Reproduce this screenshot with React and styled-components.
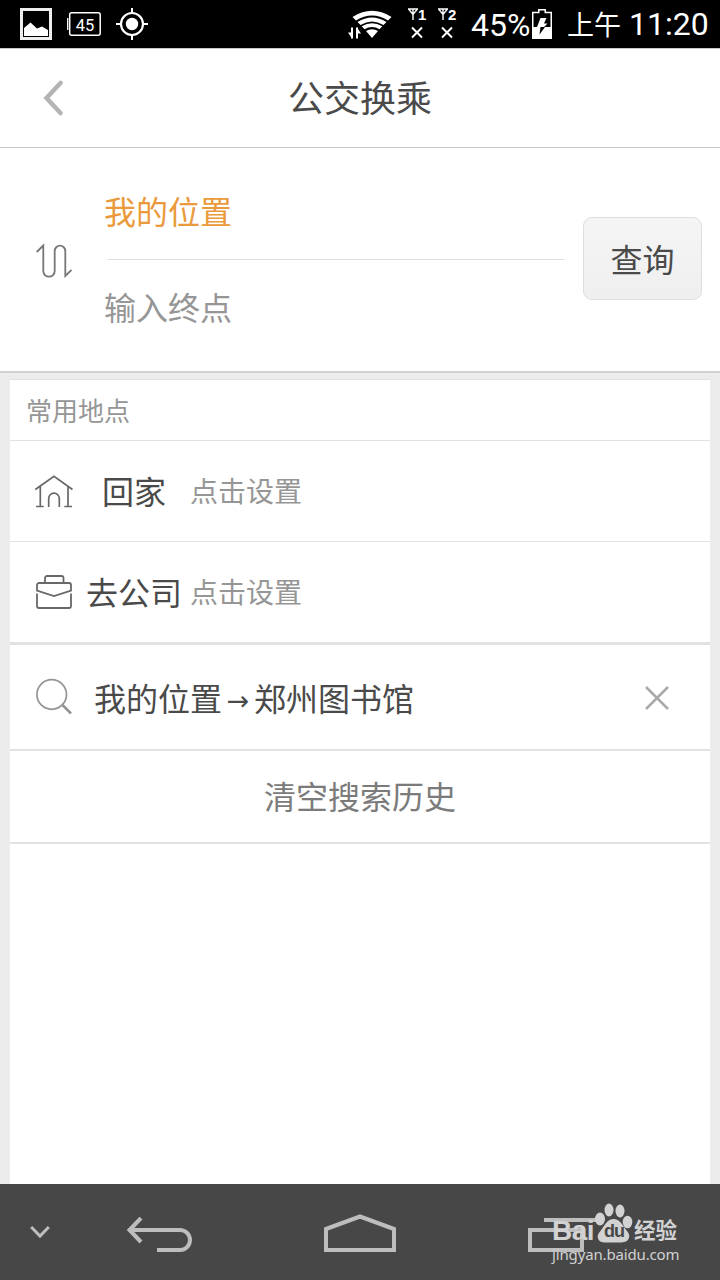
import styled, { createGlobalStyle } from "styled-components";

const GlobalStyle = createGlobalStyle`
  * {
    box-sizing: border-box;
  }
  body {
    margin: 0;
    background: #ececec;
    font-family: "Noto Sans CJK SC", sans-serif;
    color: #4a4a4a;
  }
  svg {
    display: block;
    flex: none;
  }
`;

const Screen = styled.div`
  width: 720px;
  height: 1280px;
  display: flex;
  flex-direction: column;
  overflow: hidden;
`;

const StatusBar = styled.div`
  height: 48px;
  flex: none;
  display: flex;
  align-items: center;
  padding: 0 12px 0 20px;
  background: #000;
  color: #fff;
`;

const StatusIcons = styled.div`
  display: flex;
  align-items: center;
  gap: 15px;
  margin-right: auto;
`;

const StatusText = styled.span`
  font-family: Roboto, "Noto Sans CJK SC", sans-serif;
  font-size: ${({ $size }) => $size || "32px"};
  font-weight: 400;
  line-height: 48px;
  white-space: nowrap;
  width: ${({ $width }) => $width};
  margin-left: ${({ $left }) => $left || 0};
  padding-top: ${({ $top }) => $top || 0};
`;

const Sim = styled.div`
  display: flex;
  flex-direction: column;
  width: 20px;
  margin-left: ${({ $left }) => $left};
`;

const SimTop = styled.div`
  display: flex;
  align-items: center;
  height: 15px;
  font: bold 15px/15px "Liberation Sans", sans-serif;
`;

const Header = styled.header`
  height: 100px;
  flex: none;
  display: grid;
  grid-template-columns: 100px 1fr 100px;
  align-items: center;
  background: #fff;
  border-top: 1px solid #c8c8c8;
  border-bottom: 1px solid #c8c8c8;
`;

const BackButton = styled.button`
  padding: 0 0 0 42px;
  border: 0;
  background: none;
`;

const Title = styled.h1`
  margin: 0;
  padding-bottom: 4px;
  text-align: center;
  font-size: 36px;
  font-weight: 400;
  line-height: 52px;
`;

const RouteForm = styled.section`
  height: 225px;
  flex: none;
  display: flex;
  align-items: center;
  padding: 0 18px 0 36px;
  background: #fff;
  border-bottom: 2px solid #d0d0d0;
`;

const Fields = styled.div`
  flex: 1;
  margin: 0 19px 0 32px;
`;

const Field = styled.div`
  height: 96px;
  font-size: 32px;
  line-height: ${({ $line }) => $line};
  color: ${({ $color }) => $color};
`;

const FieldLine = styled.div`
  height: 1px;
  margin-left: 4px;
  background: #dedede;
`;

const SearchButton = styled.button`
  width: 119px;
  height: 83px;
  margin-bottom: 2px;
  padding: 0 0 1px;
  border: 1.5px solid #dedede;
  border-radius: 9px;
  background: linear-gradient(#f5f5f5, #efefef);
  font: 32px "Noto Sans CJK SC", sans-serif;
  color: #4a4a4a;
`;

const Panel = styled.main`
  flex: 1;
  margin: 6px 10px 0;
  background: #fff;
  border-top: 1px solid #e2e2e2;
`;

const SectionTitle = styled.h2`
  height: 61px;
  margin: 0;
  padding-left: 16px;
  font-size: 26px;
  font-weight: 400;
  line-height: 59px;
  color: #969696;
  border-bottom: 1px solid #e2e2e2;
`;

const Row = styled.div`
  height: ${({ $height }) => $height};
  display: flex;
  align-items: center;
  justify-content: ${({ $center }) => ($center ? "center" : "flex-start")};
  padding: ${({ $center }) => ($center ? 0 : "0 39px 0 24px")};
  border-bottom: ${({ $line }) => $line || "1px"} solid #e2e2e2;
`;

const PlaceName = styled.span`
  width: 110px;
  margin-left: 5px;
  padding-bottom: 3px;
  text-align: center;
  font-size: 32px;
  line-height: 48px;
`;

const PlaceHint = styled.span`
  margin-left: 1px;
  padding-bottom: 2px;
  font-size: 28px;
  line-height: 48px;
  color: #969696;
`;

const HistoryText = styled.span`
  flex: 1;
  display: flex;
  margin-left: 20px;
  font-size: 32px;
  line-height: 48px;
`;

const Arrow = styled.span`
  width: 32px;
  text-align: center;
  font-family: "DejaVu Sans", sans-serif;
  font-size: 27px;
  line-height: 56px;
  height: 48px;
`;

const ClearText = styled.span`
  padding-bottom: 3px;
  font-size: 32px;
  line-height: 48px;
  color: #7b7b7b;
`;

const NavBar = styled.nav`
  position: relative;
  height: 96px;
  flex: none;
  background: #474747;
  display: flex;
  align-items: center;
  padding-left: 30px;
`;

const NavButton = styled.button`
  margin-left: ${({ $left }) => $left || 0};
  padding: ${({ $top }) => $top || 0} 0 0;
  border: 0;
  background: none;
`;

/* the watermark lies over the recents button */
const Watermark = styled.div`
  position: absolute;
  left: 552px;
  top: 17px;
  width: 130px;
  color: #d2d2d2;
`;

const Brand = styled.div`
  display: flex;
  align-items: flex-end;
  height: 46px;
`;

const BrandText = styled.span`
  width: ${({ $width }) => $width};
  font: bold ${({ $size }) => $size} / 32px "Liberation Sans", "Noto Sans CJK SC", sans-serif;
  letter-spacing: ${({ $spacing }) => $spacing || 0};
  white-space: nowrap;
`;

const Paw = styled.div`
  position: relative;
  width: 39px;
  height: 42px;
  margin-bottom: 3px;
`;

const PawText = styled.span`
  position: absolute;
  left: 9px;
  top: 19px;
  font: bold 18px/20px "Liberation Sans", sans-serif;
  letter-spacing: -1px;
  color: #474747;
`;

const Site = styled.div`
  font: 15px/18px "Noto Sans", sans-serif;
  margin-top: -2px;
  letter-spacing: -0.15px;
`;

function PictureIcon() {
  return (
    <svg width="32" height="32" viewBox="0 0 32 32">
      <rect x="1.5" y="1.5" width="29" height="29" fill="none" stroke="#eee" strokeWidth="3" />
      <path d="M4 28V20L10.500 14.500 17 20.500 22 18.500 28 22V28Z" fill="#fff" />
    </svg>
  );
}

function LevelIcon() {
  return (
    <svg width="34" height="24" viewBox="0 0 34 24">
      <path d="M.7 6v12" stroke="#fff" strokeWidth="1.300" />
      <rect x="2.700" y=".8" width="30.500" height="22.400" rx="2" fill="none" stroke="#fff" strokeWidth="1.500" />
      <text x="18" y="18.500" textAnchor="middle" fill="#fff" fontFamily="Roboto" fontSize="16.500">
        45
      </text>
    </svg>
  );
}

function LocateIcon() {
  return (
    <svg width="32" height="32" viewBox="0 0 32 32" fill="none" stroke="#fff">
      <circle cx="16" cy="16" r="11" strokeWidth="2.200" />
      <circle cx="16" cy="16" r="6.200" fill="#fff" stroke="none" />
      <path d="M16 0v5M16 27v5M0 16h5M27 16h5" strokeWidth="2" />
    </svg>
  );
}

function WifiIcon() {
  return (
    <svg width="44" height="30" viewBox="0 0 44 30">
      <path d="M4.500 8Q24 -4.500 43.500 8L40 11.500Q24 1.500 8 11.500Z" fill="#fff" />
      <path d="M9.500 13Q24 4 38.500 13L35.500 16Q24 9 12.500 16Z" fill="#fff" />
      <path d="M13.700 17.300Q24 11 34.300 17.300L31.500 20.300Q24 15.500 16.500 20.300Z" fill="#fff" />
      <path d="M18 22Q24 18.300 30 22L24 29Z" fill="#fff" />
      <path d="M4 18.500v11M9 18.500v11" stroke="#fff" strokeWidth="2" />
      <path d="M0 23.500h4v6ZM13 24.500H9v-6Z" fill="#fff" />
    </svg>
  );
}

function SimSignal({ number, left }) {
  return (
    <Sim $left={left}>
      <SimTop>
        <svg width="10" height="12" viewBox="0 0 10 12" fill="none" stroke="#fff" strokeWidth="1.400">
          <path d="M.5 1h9L5 6.500ZM5 1v11" />
        </svg>
        {number}
      </SimTop>
      <svg width="20" height="20" viewBox="0 0 20 20" stroke="#fff" strokeWidth="2">
        <path d="M4 5.500l10 10M14 5.500L4 15.500" />
      </svg>
    </Sim>
  );
}

function BatteryIcon() {
  return (
    <svg width="20" height="30" viewBox="0 0 20 30">
      <path d="M.75 3.500h6v-2.700h6.500v2.700h6v25.700H.75Z" fill="none" stroke="#fff" strokeWidth="1.500" />
      <path d="M1 18h18v11H1Z" fill="#fff" />
      <path d="M8.500 9h6l-2.500 5.500h3.500L12 18H5Z" fill="#fff" />
      <path d="M8.500 18H13L7.500 25.500Z" fill="#000" />
    </svg>
  );
}

function SwapIcon() {
  return (
    <svg width="36" height="36" viewBox="0 -2 36 36" fill="none" stroke="#777" strokeWidth="1.800">
      <path d="M.7 8L7.300 1.500V27a5.700 5.700 0 0 0 11.400 0V7a5.300 5.300 0 0 1 10.600 0V32L35.500 26" />
    </svg>
  );
}

function HomeIcon() {
  return (
    <svg width="40" height="34" viewBox="0 0 40 34" fill="none" stroke="#686868" strokeWidth="1.700">
      <path d="M1.300 15.500L20 2.200 38.500 15.500M6.300 12.500V32.500M34 12.500V32.500M2 32.500h7.800M30.300 32.500H38M14.700 33V24.500a5.300 5.300 0 0 1 10.600 0V33" />
    </svg>
  );
}

function WorkIcon() {
  return (
    <svg width="40" height="34" viewBox="0 0 40 34" fill="none" stroke="#686868" strokeWidth="1.800">
      <path d="M11 7.500V3a2 2 0 0 1 2-2h14.500a2 2 0 0 1 2 2V7.500" />
      <path d="M3 18.500V31a2 2 0 0 0 2 2H35a2 2 0 0 0 2-2V18.500" />
      <path d="M3 15.500V10a2 2 0 0 1 2-2H35a2 2 0 0 1 2 2V15.500L20 21Z" />
    </svg>
  );
}

function SearchIcon() {
  return (
    <svg width="40" height="38" viewBox="0 0 40 38" fill="none" stroke="#949494">
      <circle cx="17.700" cy="16.500" r="14.800" strokeWidth="1.700" />
      <path d="M28 26.500l9 9" strokeWidth="2.500" />
    </svg>
  );
}

export default function App() {
  return (
    <Screen>
      <GlobalStyle />
      <StatusBar>
        <StatusIcons>
          <PictureIcon />
          <LevelIcon />
          <LocateIcon />
        </StatusIcons>
        <WifiIcon />
        <SimSignal number="1" left="16px" />
        <SimSignal number="2" left="10px" />
        <StatusText $left="13px" $width="61px" $top="2px">45%</StatusText>
        <BatteryIcon />
        <StatusText $left="15px" $width="62px" $size="27px" $top="4px">上午</StatusText>
        <StatusText $width="79px">11:20</StatusText>
      </StatusBar>

      <Header>
        <BackButton>
          <svg width="22" height="36" viewBox="0 0 22 36" fill="none" stroke="#b4b4b4" strokeWidth="4.500" strokeLinecap="round">
            <path d="M18.500 3L4.500 18 18.500 33" />
          </svg>
        </BackButton>
        <Title>公交换乘</Title>
      </Header>

      <RouteForm>
        <SwapIcon />
        <Fields>
          <Field $color="#ea9a3c" $line="95px">我的位置</Field>
          <FieldLine />
          <Field $color="#969696" $line="93px">输入终点</Field>
        </Fields>
        <SearchButton>查询</SearchButton>
      </RouteForm>

      <Panel>
        <SectionTitle>常用地点</SectionTitle>
        <Row $height="101px">
          <HomeIcon />
          <PlaceName>回家</PlaceName>
          <PlaceHint>点击设置</PlaceHint>
        </Row>
        <Row $height="103px" $line="3px">
          <WorkIcon />
          <PlaceName>去公司</PlaceName>
          <PlaceHint>点击设置</PlaceHint>
        </Row>
        <Row $height="106px" $line="2px">
          <SearchIcon />
          <HistoryText>
            我的位置<Arrow>→</Arrow>郑州图书馆
          </HistoryText>
          <svg width="28" height="28" viewBox="0 0 28 28" stroke="#aaa" strokeWidth="2.600">
            <path d="M3 4l22 22M25 4L3 26" />
          </svg>
        </Row>
        <Row $height="93px" $line="2px" $center>
          <ClearText>清空搜索历史</ClearText>
        </Row>
      </Panel>

      <NavBar>
        <NavButton>
          <svg width="20" height="14" viewBox="0 0 20 14" fill="none" stroke="#bdbdbd" strokeWidth="3">
            <path d="M1.200 2L10 11 18.800 2" />
          </svg>
        </NavButton>
        <NavButton $left="75px" $top="6px">
          <svg width="68" height="36" viewBox="0 0 68 36" fill="none" stroke="#bdbdbd" strokeWidth="4">
            <path d="M4 13H55a10 10 0 0 1 0 20H32" />
            <path d="M16 1L4.500 13 16 25" />
          </svg>
        </NavButton>
        <NavButton $left="131px" $top="2px">
          <svg width="72" height="38" viewBox="0 0 72 38" fill="none" stroke="#bdbdbd" strokeWidth="4">
            <path d="M2 15L36 2.500 70 15V36H2Z" />
          </svg>
        </NavButton>
        <NavButton $left="132px" $top="6px">
          <svg width="72" height="36" viewBox="0 0 72 36" fill="none" stroke="#bdbdbd" strokeWidth="4">
            <path d="M16 3H68M2 13H54V33H2Z" />
          </svg>
        </NavButton>
        <Watermark>
          <Brand>
            <BrandText $width="43px" $size="28px" $spacing="-0.5px">Bai</BrandText>
            <Paw>
              <svg width="38" height="42" viewBox="0 0 38 42" fill="currentColor">
                <ellipse cx="5" cy="17" rx="5" ry="6.500" />
                <ellipse cx="14" cy="8" rx="4.500" ry="6.500" />
                <ellipse cx="25" cy="9" rx="4.500" ry="6.500" />
                <ellipse cx="32.500" cy="20" rx="4.800" ry="6.300" />
                <path d="M18.500 17c6 0 9 6 12 10s5 6 3 10-8 3.500-15 3.500-13 1-15-3 0-6 3-10 6-10.500 12-10.500Z" />
              </svg>
              <PawText>du</PawText>
            </Paw>
            <BrandText $size="21.5px">经验</BrandText>
          </Brand>
          <Site>jingyan.baidu.com</Site>
        </Watermark>
      </NavBar>
    </Screen>
  );
}
